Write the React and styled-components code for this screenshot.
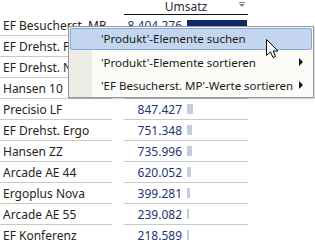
import React from "react";
import styled, { createGlobalStyle } from "styled-components";

const Global = createGlobalStyle`
  html, body { margin: 0; padding: 0; background: #ffffff; }
  body { width: 315px; height: 240px; overflow: hidden; font-family: "Noto Sans", "Open Sans", sans-serif; }
`;

const Page = styled.div`
  position: relative;
  width: 315px;
  height: 240px;
  overflow: hidden;
  background: #fff;
`;

const Table = styled.div`
  display: flex;
  flex-direction: column;
`;

const HeaderRow = styled.div`
  display: grid;
  grid-template-columns: 112px 124px;
  column-gap: 12px;
  height: 15px;
`;

const HeaderCell = styled.div`
  position: relative;
  display: flex;
  align-items: center;
  justify-content: center;
  border-bottom: 1px solid #111;
  font-size: 12px;
  color: #2c2c3c;
  line-height: 14px;
  box-sizing: border-box;
`;

const Filter = styled.svg`
  position: absolute;
  right: 3px;
  top: 2px;
`;

const Row = styled.div`
  display: grid;
  grid-template-columns: 112px 124px;
  column-gap: 12px;
  height: 21px;
`;

const NameCell = styled.div`
  display: flex;
  align-items: center;
  padding-left: 3px;
  border-bottom: 1px solid #c9c9c9;
  font-size: 12px;
  color: #2a1e18;
  white-space: nowrap;
  overflow: hidden;
`;

const ValueCell = styled.div`
  display: flex;
  align-items: center;
  border-bottom: 1px solid #c9c9c9;
`;

const Value = styled.span`
  width: 58px;
  text-align: right;
  font-size: 12px;
  color: #1f3575;
  white-space: nowrap;
`;

const Bar = styled.div`
  margin-left: 5px;
  height: 10px;
  background: ${(p) => (p.$selected ? "#0e2a66" : "#c5cddd")};
`;

const Menu = styled.div`
  position: absolute;
  left: 68px;
  top: 26px;
  width: 246px;
  height: 72px;
  box-sizing: border-box;
  border: 1px solid #979797;
  background: linear-gradient(to right, #eeede5 0 23px, #fbfbf8 23px);
  padding: 1px;
  display: flex;
  flex-direction: column;
  box-shadow: 1px 1px 1px rgba(0, 0, 0, 0.15);
`;

const Item = styled.div`
  position: relative;
  display: flex;
  align-items: center;
  height: ${(p) => p.$h}px;
  box-sizing: border-box;
  padding-left: 30px;
  font-size: 11.5px;
  color: #1a1a1a;
  white-space: nowrap;
  border: 1px solid ${(p) => (p.$active ? "#86a9dc" : "transparent")};
  border-radius: 2px;
  background: ${(p) => (p.$active ? "#c3d5ef" : "transparent")};
`;

const Arrow = styled.span`
  position: absolute;
  right: 8px;
  top: 50%;
  margin-top: -4px;
  width: 0;
  height: 0;
  border-top: 4px solid transparent;
  border-bottom: 4px solid transparent;
  border-left: 4px solid #111;
`;

const Cursor = styled.svg`
  position: absolute;
  left: 266px;
  top: 39px;
`;

const rows = [
  ["EF Besucherst. MP", 8404276],
  ["EF Drehst. Profi", 0],
  ["EF Drehst. Nova", 0],
  ["Hansen 10", 0],
  ["Precisio LF", 847427],
  ["EF Drehst. Ergo", 751348],
  ["Hansen ZZ", 735996],
  ["Arcade AE 44", 620052],
  ["Ergoplus Nova", 399281],
  ["Arcade AE 55", 239082],
  ["EF Konferenz", 218589],
];

const fmt = (n) => n.toLocaleString("de-DE");

export default function App() {
  return (
    <Page>
      <Global />
      <Table>
        <HeaderRow>
          <div />
          <HeaderCell>
            Umsatz
            <Filter width="6" height="5" viewBox="0 0 6 5">
              <rect x="0" y="0" width="6" height="1" fill="#8a8a8a" />
              <path d="M0 2 L6 2 L3 5 Z" fill="#8a8a8a" />
            </Filter>
          </HeaderCell>
        </HeaderRow>
        {rows.map(([name, v], i) => (
          <Row key={i}>
            <NameCell>{name}</NameCell>
            <ValueCell>
              <Value>{v ? fmt(v) : ""}</Value>
              {v ? (
                <Bar $selected={i === 0} style={{ width: Math.max(2, Math.round((v / 8404276) * 60)) + "px" }} />
              ) : null}
            </ValueCell>
          </Row>
        ))}
      </Table>
      <Menu>
        <Item $active $h={22}>'Produkt'-Elemente suchen</Item>
        <Item $h={25}>
          'Produkt'-Elemente sortieren
          <Arrow />
        </Item>
        <Item $h={22}>
          'EF Besucherst. MP'-Werte sortieren
          <Arrow />
        </Item>
      </Menu>
      <Cursor width="13" height="20" viewBox="0 0 13 20">
        <path d="M0.5 0.5 L0.5 16.5 L4.5 12.8 L7 18.5 L9.5 17.5 L7.2 12 L12 12 Z" fill="#fff" stroke="#000" strokeWidth="1" strokeLinejoin="miter" />
      </Cursor>
    </Page>
  );
}
